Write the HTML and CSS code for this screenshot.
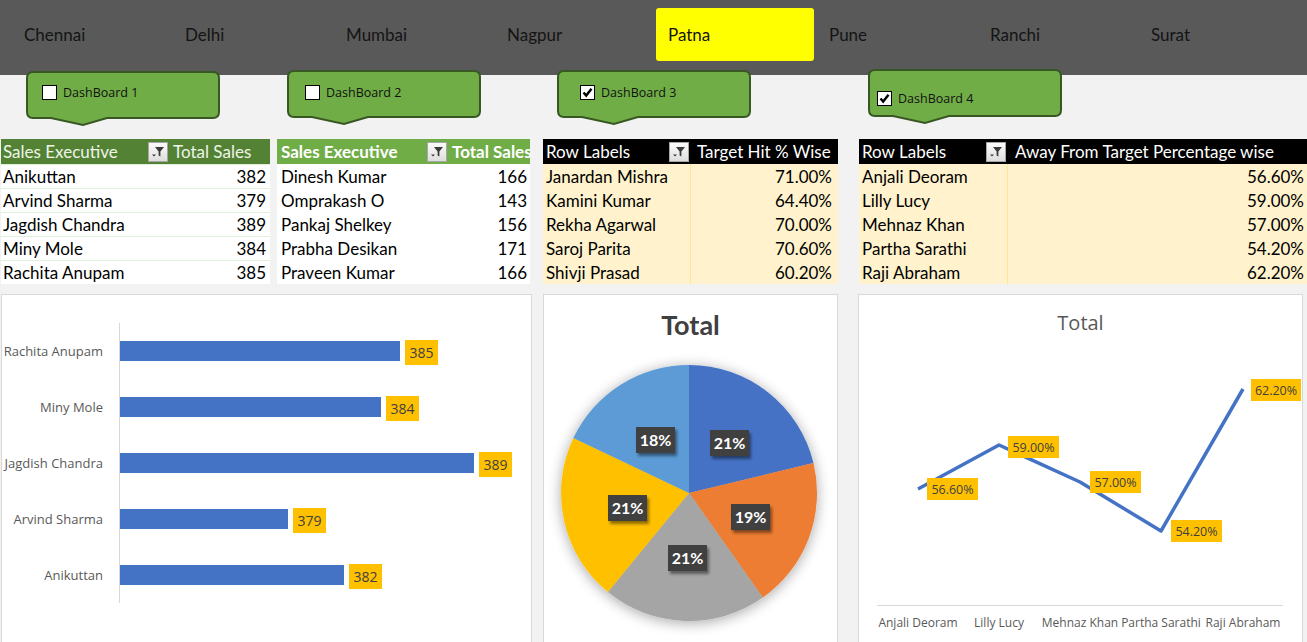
FILE: index.html
```html
<!DOCTYPE html>
<html>
<head>
<meta charset="utf-8">
<title>Sales Dashboard</title>
<link rel="stylesheet" href="styles.css">
</head>
<body>
<div class="page">
  <div class="topbar">
    <div class="slicer">Chennai</div>
    <div class="slicer">Delhi</div>
    <div class="slicer">Mumbai</div>
    <div class="slicer">Nagpur</div>
    <div class="slicer active">Patna</div>
    <div class="slicer">Pune</div>
    <div class="slicer">Ranchi</div>
    <div class="slicer">Surat</div>
  </div>

  <div class="callouts">
    <div class="callout c1">
      <svg class="callout-bg" width="194" height="56" viewBox="0 0 194 56"><path d="M7,1 H187 Q193,1 193,7 V41 Q193,47 187,47 H81 L57,54 L25,47 H7 Q1,47 1,41 V7 Q1,1 7,1 Z"/></svg>
      <div class="callout-body"><span class="check"></span><span class="cl-text">DashBoard 1</span></div>
    </div>
    <div class="callout c2">
      <svg class="callout-bg" width="194" height="56" viewBox="0 0 194 56"><path d="M7,1 H187 Q193,1 193,7 V41 Q193,47 187,47 H81 L57,54 L25,47 H7 Q1,47 1,41 V7 Q1,1 7,1 Z"/></svg>
      <div class="callout-body"><span class="check"></span><span class="cl-text">DashBoard 2</span></div>
    </div>
    <div class="callout c3">
      <svg class="callout-bg" width="194" height="56" viewBox="0 0 194 56"><path d="M7,1 H187 Q193,1 193,7 V41 Q193,47 187,47 H81 L57,54 L25,47 H7 Q1,47 1,41 V7 Q1,1 7,1 Z"/></svg>
      <div class="callout-body"><span class="check checked"><svg width="11" height="11" viewBox="0 0 11 11"><path d="M1.5,5.5 L4.2,8.6 L9.5,1.8"/></svg></span><span class="cl-text">DashBoard 3</span></div>
    </div>
    <div class="callout c4">
      <svg class="callout-bg" width="194" height="56" viewBox="0 0 194 56"><path d="M7,1 H187 Q193,1 193,7 V41 Q193,47 187,47 H81 L57,54 L25,47 H7 Q1,47 1,41 V7 Q1,1 7,1 Z"/></svg>
      <div class="callout-body"><span class="check checked"><svg width="11" height="11" viewBox="0 0 11 11"><path d="M1.5,5.5 L4.2,8.6 L9.5,1.8"/></svg></span><span class="cl-text">DashBoard 4</span></div>
    </div>
  </div>

  <div class="tables">
    <div class="pt pt1">
      <div class="ph ph1">Sales Executive<span class="fbtn"><svg width="18" height="18" viewBox="0 0 18 18"><path class="fun" d="M6,4 H15 L11.4,8.6 V13.5 L9.6,12.4 V8.6 Z"/><path class="arr" d="M3,11.5 H7 L5,13.5 Z"/></svg></span></div>
      <div class="ph ph2">Total Sales</div>
      <div class="c1c">Anikuttan</div><div class="c2c">382</div>
      <div class="c1c">Arvind Sharma</div><div class="c2c">379</div>
      <div class="c1c">Jagdish Chandra</div><div class="c2c">389</div>
      <div class="c1c">Miny Mole</div><div class="c2c">384</div>
      <div class="c1c">Rachita Anupam</div><div class="c2c">385</div>
    </div>
    <div class="pt pt2">
      <div class="ph ph1">Sales Executive<span class="fbtn"><svg width="18" height="18" viewBox="0 0 18 18"><path class="fun" d="M6,4 H15 L11.4,8.6 V13.5 L9.6,12.4 V8.6 Z"/><path class="arr" d="M3,11.5 H7 L5,13.5 Z"/></svg></span></div>
      <div class="ph ph2">Total Sales</div>
      <div class="c1c">Dinesh Kumar</div><div class="c2c">166</div>
      <div class="c1c">Omprakash O</div><div class="c2c">143</div>
      <div class="c1c">Pankaj Shelkey</div><div class="c2c">156</div>
      <div class="c1c">Prabha Desikan</div><div class="c2c">171</div>
      <div class="c1c">Praveen Kumar</div><div class="c2c">166</div>
    </div>
    <div class="pt pt3">
      <div class="ph ph1">Row Labels<span class="fbtn"><svg width="18" height="18" viewBox="0 0 18 18"><path class="fun" d="M6,4 H15 L11.4,8.6 V13.5 L9.6,12.4 V8.6 Z"/><path class="arr" d="M3,11.5 H7 L5,13.5 Z"/></svg></span></div>
      <div class="ph ph2">Target Hit % Wise</div>
      <div class="c1c">Janardan Mishra</div><div class="c2c">71.00%</div>
      <div class="c1c">Kamini Kumar</div><div class="c2c">64.40%</div>
      <div class="c1c">Rekha Agarwal</div><div class="c2c">70.00%</div>
      <div class="c1c">Saroj Parita</div><div class="c2c">70.60%</div>
      <div class="c1c">Shivji Prasad</div><div class="c2c">60.20%</div>
    </div>
    <div class="pt pt4">
      <div class="ph ph1">Row Labels<span class="fbtn"><svg width="18" height="18" viewBox="0 0 18 18"><path class="fun" d="M6,4 H15 L11.4,8.6 V13.5 L9.6,12.4 V8.6 Z"/><path class="arr" d="M3,11.5 H7 L5,13.5 Z"/></svg></span></div>
      <div class="ph ph2">Away From Target Percentage wise</div>
      <div class="c1c">Anjali Deoram</div><div class="c2c">56.60%</div>
      <div class="c1c">Lilly Lucy</div><div class="c2c">59.00%</div>
      <div class="c1c">Mehnaz Khan</div><div class="c2c">57.00%</div>
      <div class="c1c">Partha Sarathi</div><div class="c2c">54.20%</div>
      <div class="c1c">Raji Abraham</div><div class="c2c">62.20%</div>
    </div>
  </div>

  <div class="charts">
    <div class="panel bar-panel">
      <div class="bar-chart">
        <div class="bc-row"><div class="bc-label">Rachita Anupam</div><div class="bc-plot"><div class="bar" style="width:280px"></div><div class="bval">385</div></div></div>
        <div class="bc-row"><div class="bc-label">Miny Mole</div><div class="bc-plot"><div class="bar" style="width:261px"></div><div class="bval">384</div></div></div>
        <div class="bc-row"><div class="bc-label">Jagdish Chandra</div><div class="bc-plot"><div class="bar" style="width:354px"></div><div class="bval">389</div></div></div>
        <div class="bc-row"><div class="bc-label">Arvind Sharma</div><div class="bc-plot"><div class="bar" style="width:168px"></div><div class="bval">379</div></div></div>
        <div class="bc-row"><div class="bc-label">Anikuttan</div><div class="bc-plot"><div class="bar" style="width:224px"></div><div class="bval">382</div></div></div>
      </div>
    </div>

    <div class="panel pie-panel">
      <div class="pie-title">Total</div>
      <svg class="pie" width="293" height="300" viewBox="0 0 293 300">
        <defs>
          <filter id="glow" x="-30%" y="-30%" width="160%" height="160%">
            <feGaussianBlur in="SourceAlpha" stdDeviation="7"/>
            <feOffset dx="0" dy="2" result="b"/>
            <feComponentTransfer><feFuncA type="linear" slope="0.35"/></feComponentTransfer>
            <feMerge><feMergeNode/><feMergeNode in="SourceGraphic"/></feMerge>
          </filter>
          <filter id="lblshadow" x="-30%" y="-30%" width="170%" height="170%">
            <feGaussianBlur in="SourceAlpha" stdDeviation="1.8"/>
            <feOffset dx="2" dy="3"/>
            <feComponentTransfer><feFuncA type="linear" slope="0.45"/></feComponentTransfer>
            <feMerge><feMergeNode/><feMergeNode in="SourceGraphic"/></feMerge>
          </filter>
        </defs>
        <g filter="url(#glow)">
          <path fill="#4472c4" d="M145,148 L145,20 A128,128 0 0 1 269.47,118.12 Z"/>
          <path fill="#ed7d31" d="M145,148 L269.47,118.12 A128,128 0 0 1 218.78,252.59 Z"/>
          <path fill="#a5a5a5" d="M145,148 L218.78,252.59 A128,128 0 0 1 63.93,247.05 Z"/>
          <path fill="#ffc000" d="M145,148 L63.93,247.05 A128,128 0 0 1 29.38,93.1 Z"/>
          <path fill="#5b9bd5" d="M145,148 L29.38,93.1 A128,128 0 0 1 145,20 Z"/>
        </g>
        <g class="plbl" filter="url(#lblshadow)">
          <rect x="166" y="85" width="39" height="26"/>
          <rect x="187" y="159" width="39" height="26"/>
          <rect x="124" y="200" width="39" height="26"/>
          <rect x="64" y="150" width="39" height="26"/>
          <rect x="92" y="82" width="39" height="26"/>
        </g>
        <g class="ptxt">
          <text x="185.5" y="104">21%</text>
          <text x="206.5" y="178">19%</text>
          <text x="143.5" y="219">21%</text>
          <text x="83.5" y="169">21%</text>
          <text x="111.5" y="101">18%</text>
        </g>
      </svg>
    </div>

    <div class="panel line-panel">
      <div class="line-title">Total</div>
      <svg class="line" width="443" height="300" viewBox="0 0 443 300">
        <polyline class="ln" points="59,148 140,104 221,141 302,190 384,48"/>
        <g class="lrect">
          <rect x="68" y="137" width="51" height="22"/>
          <rect x="149" y="95" width="51" height="22"/>
          <rect x="231" y="130" width="51" height="22"/>
          <rect x="312" y="179" width="51" height="22"/>
          <rect x="392" y="38" width="50" height="22"/>
        </g>
        <g class="ltxt">
          <text x="93.5" y="152.5">56.60%</text>
          <text x="174.5" y="110.5">59.00%</text>
          <text x="256.5" y="145.5">57.00%</text>
          <text x="337.5" y="194.5">54.20%</text>
          <text x="417" y="53.5">62.20%</text>
        </g>
        <line class="axis" x1="18" y1="264.5" x2="424" y2="264.5"/>
        <g class="cat">
          <text x="59" y="286">Anjali Deoram</text>
          <text x="140" y="286">Lilly Lucy</text>
          <text x="221" y="286">Mehnaz Khan</text>
          <text x="302" y="286">Partha Sarathi</text>
          <text x="384" y="286">Raji Abraham</text>
        </g>
      </svg>
    </div>
  </div>
</div>
</body>
</html>
```

FILE: styles.css
```css
html, body {
  margin: 0;
  padding: 0;
}
body {
  background: #f2f2f2;
  font-family: Lato, "Noto Sans", sans-serif;
  width: 1307px;
  height: 642px;
  overflow: hidden;
}
.page {
  width: 1307px;
}

/* top slicer bar */
.topbar {
  height: 75px;
  background: #595959;
  display: flex;
  gap: 3px;
  padding: 8px 0 0 12px;
  box-sizing: border-box;
}
.slicer {
  flex: none;
  width: 158px;
  height: 53px;
  display: flex;
  align-items: center;
  padding-left: 12px;
  box-sizing: border-box;
  font-size: 17px;
  color: #141414;
}
.slicer.active {
  background: #ffff00;
  border-radius: 3px;
}

/* callouts */
.callouts {
  display: flex;
  align-items: flex-start;
  margin-top: -5px;
  height: 55px;
}
.callout {
  position: relative;
  flex: none;
  width: 194px;
  height: 56px;
}
.callout-bg {
  position: absolute;
  left: 0;
  top: 0;
}
.callout-bg path {
  fill: #70ad47;
  stroke: #385723;
  stroke-width: 2;
}
.callout-body {
  position: relative;
  display: flex;
  align-items: center;
  gap: 6px;
  padding-top: 13px;
  font-family: "Open Sans", "Noto Sans", sans-serif;
  font-size: 12.5px;
  color: #111;
}
.c1 { margin-left: 26px; margin-top: 1px; }
.c1 .callout-body { padding-left: 16px; }
.c2 { margin-left: 67px; }
.c2 .callout-body { padding-left: 18px; padding-top: 14px; }
.c3 { margin-left: 76px; }
.c3 .callout-body { padding-left: 23px; padding-top: 14px; }
.c4 { margin-left: 117px; margin-top: -1px; }
.c4 .callout-body { padding-left: 9px; padding-top: 21px; }
.check {
  width: 15px;
  height: 15px;
  box-sizing: border-box;
  border: 1.5px solid #000;
  background: #fff;
  display: flex;
  align-items: center;
  justify-content: center;
}
.check svg path {
  fill: none;
  stroke: #000;
  stroke-width: 2.4;
}

/* pivot tables */
.tables {
  display: flex;
  align-items: flex-start;
  margin-top: 14px;
}
.pt {
  display: grid;
  grid-template-rows: 25px repeat(5, 24px);
  font-size: 17px;
  flex: none;
}
.ph {
  display: flex;
  align-items: center;
  white-space: nowrap;
  overflow: hidden;
}
.ph1 {
  justify-content: space-between;
}
.fbtn {
  flex: none;
  width: 20px;
  height: 20px;
  box-sizing: border-box;
  border: 1px solid #a6a6a6;
  background: linear-gradient(#fbfbfb, #dedede);
  display: flex;
  align-items: center;
  justify-content: center;
}
.fbtn .fun { fill: #3a3a3a; }
.fbtn .arr { fill: #3a3a3a; }
.c1c, .c2c {
  display: flex;
  align-items: center;
  white-space: nowrap;
  color: #000;
}
.c2c {
  justify-content: flex-end;
}

.pt1 {
  margin-left: 1px;
  grid-template-columns: 170px 99px;
}
.pt1 .ph { background: #548235; color: #eef5e8; }
.pt1 .ph1 { padding-left: 2px; padding-right: 3px; }
.pt1 .ph2 { padding-left: 2px; }
.pt1 .c1c, .pt1 .c2c { background: #fff; border-top: 1px solid #e2efda; }
.pt1 .c1c { padding-left: 2px; }
.pt1 .c2c { padding-right: 4px; }

.pt2 {
  margin-left: 7px;
  grid-template-columns: 173px 80px;
}
.pt2 .ph { background: #70ad47; color: #fff; font-weight: 700; }
.pt2 .ph1 { padding-left: 4px; padding-right: 3px; }
.pt2 .ph2 { padding-left: 2px; }
.pt2 .c1c, .pt2 .c2c { background: #fff; }
.pt2 .c1c { padding-left: 4px; }
.pt2 .c2c { padding-right: 3px; }

.pt3 {
  margin-left: 13px;
  grid-template-columns: 147px 148px;
}
.pt3 .ph, .pt4 .ph { background: #000; color: #fff; }
.pt3 .ph1 { padding-left: 3px; padding-right: 1px; }
.pt3 .ph2 { padding-left: 7px; }
.pt3 .c1c, .pt3 .c2c, .pt4 .c1c, .pt4 .c2c { background: #fff2cc; }
.pt3 .c2c, .pt4 .c2c { border-left: 1px solid #ffe699; }
.pt3 .c1c { padding-left: 3px; }
.pt3 .c2c { padding-right: 6px; }

.pt4 {
  margin-left: 21px;
  grid-template-columns: 148px 300px;
}
.pt4 .ph1 { padding-left: 3px; padding-right: 1px; }
.pt4 .ph2 { padding-left: 8px; }
.pt4 .c1c { padding-left: 3px; }
.pt4 .c2c { padding-right: 3px; }

/* charts */
.charts {
  display: flex;
  align-items: flex-start;
  margin-top: 10px;
}
.panel {
  flex: none;
  background: #fff;
  border: 1px solid #d9d9d9;
  box-sizing: border-box;
  height: 360px;
}
.bar-panel {
  margin-left: 1px;
  width: 531px;
}
.bar-chart {
  padding-top: 28px;
  font-family: "Open Sans", "Noto Sans", sans-serif;
}
.bc-row {
  display: flex;
  height: 56px;
}
.bc-label {
  flex: none;
  width: 117px;
  box-sizing: border-box;
  padding-right: 16px;
  text-align: right;
  font-size: 13px;
  color: #595959;
  display: flex;
  align-items: center;
  justify-content: flex-end;
  white-space: nowrap;
}
.bc-plot {
  flex: 1;
  display: flex;
  align-items: center;
  border-left: 1px solid #d9d9d9;
}
.bar {
  height: 20px;
  background: #4472c4;
}
.bval {
  margin-left: 5px;
  width: 33px;
  height: 25px;
  background: #ffc000;
  color: #404040;
  font-size: 14px;
  display: flex;
  align-items: center;
  justify-content: center;
  margin-top: 2px;
}

.pie-panel {
  margin-left: 11px;
  width: 295px;
}
.pie-title {
  padding-top: 10px;
  height: 40px;
  line-height: 40px;
  text-align: center;
  font-size: 27px;
  font-weight: 700;
  color: #404040;
}
.pie {
  display: block;
}
.plbl rect {
  fill: #3f3f3f;
}
.ptxt text {
  fill: #fff;
  font-family: Lato, "Noto Sans", sans-serif;
  font-weight: 700;
  font-size: 16px;
  text-anchor: middle;
}

.line-panel {
  margin-left: 20px;
  width: 445px;
}
.line-title {
  padding-top: 10px;
  height: 36px;
  line-height: 36px;
  text-align: center;
  font-family: "Open Sans", "Noto Sans", sans-serif;
  font-size: 20px;
  color: #595959;
}
.line {
  display: block;
}
.ln {
  fill: none;
  stroke: #4472c4;
  stroke-width: 3.5;
  stroke-linejoin: round;
}
.lrect rect {
  fill: #ffc000;
}
.ltxt text {
  font-family: "Open Sans", "Noto Sans", sans-serif;
  font-size: 12.5px;
  fill: #404040;
  text-anchor: middle;
}
.axis {
  stroke: #d9d9d9;
  stroke-width: 1;
}
.cat text {
  font-family: "Open Sans", "Noto Sans", sans-serif;
  font-size: 12px;
  fill: #595959;
  text-anchor: middle;
}
```
